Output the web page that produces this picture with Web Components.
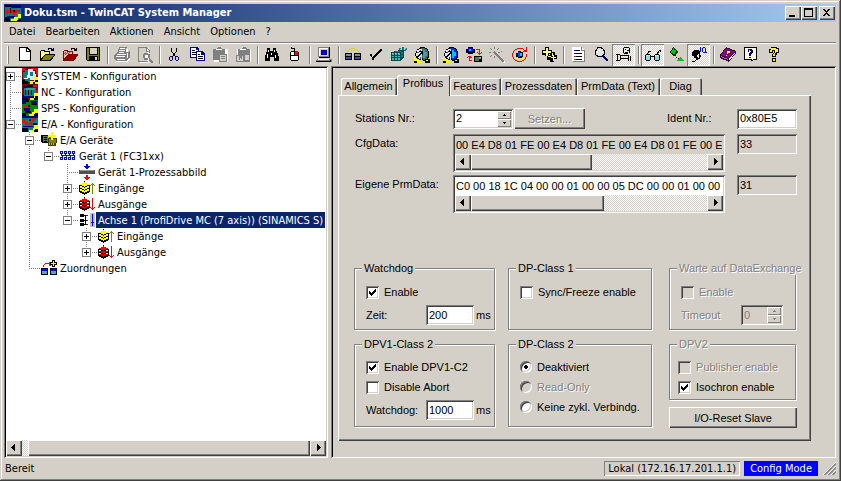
<!DOCTYPE html>
<html lang="de">
<head>
<meta charset="utf-8">
<title>Doku.tsm - TwinCAT System Manager</title>
<style>
html, body { margin: 0; height: 100%; }
body {
  --face: #d4d0c8;
  --raised: inset 1px 1px #fff, inset -1px -1px #404040, inset -2px -2px #808080;
  --sunken: inset 1px 1px #808080, inset -1px -1px #fff, inset 2px 2px #404040, inset -2px -2px #d4d0c8;
  --dither: repeating-conic-gradient(#fff 0 25%, #d4d0c8 0 50%) 0 0 / 2px 2px;
  --ui: "DejaVu Sans Condensed", "DejaVu Sans", sans-serif;
  --dlg: "Liberation Sans", Arial, sans-serif;
  background: var(--face);
  color: #000;
  font: 11px/13px var(--ui);
}
</style>
</head>
<body>
<app-window></app-window>
<script>
function define(name, css, view) {
  customElements.define(name, class extends HTMLElement {
    connectedCallback() {
      if (this.shadowRoot) return;
      const t = document.createElement('template');
      t.innerHTML = `<style>*{box-sizing:border-box}${css}</style>${view(this)}`;
      this.attachShadow({ mode: 'open' }).append(t.content.cloneNode(true));
    }
  });
}

/* ---------- icons, drawn on a 16 x 16 pixel grid ---------- */
const p = (fill, d) => `<path fill="${fill}" d="${d}"/>`;
const l = (stroke, d, w = 1) => `<path fill="none" stroke="${stroke}" stroke-width="${w}" d="${d}"/>`;
const gear = (a, b) =>
  p('#ff0', 'M0 10h5l2 6H0zM12 11h4v5h-5z') +
  p('#000', 'M0 14h3v2H0zM11 14h3v-2h2v4h-5z') +
  p('#000', 'M6 0h5v1h2v1h1v2h1v7h-1v2h-2v1H9v-1H8V1H6z') +
  p('#000', 'M5 1h2v1H5zM3 2h2v1H3zM2 4h1v2H2zM1 6h1v3H1zM2 9h1v2H2zM3 11h2v1H3zM5 12h2v1H5z') +
  p(a, 'M7 1h4v1h2v2h1v6h-1v2h-2v1H9l-1-4z') +
  p(b, 'M9 3h2v2h2v4h-2v2H9V8H8V5h1z') +
  p('#dfe8ec', 'M5 2h3v3h1v3H7v4H5v-1H3V9H2V6h1V3h2z') +
  p(a, 'M3 5h2v1H3zM6 3h1v2H6zM6 10h1v2H6z') +
  l('#000', 'M3 10.5l5-5M5 4.500h3v3');
const diamond = y => `M5 ${y}h1v1h2v1h2v1h-2v1h-2v1h-1v-1h-2v-1h-2v-1h2v-1h2z`;
const stack = (a, b) => p('#000', diamond(9) + diamond(10)) + p(b, diamond(8)) + p('#000', diamond(6)) + p(b, diamond(5)) +
  p('#000', diamond(3)) + p(a, diamond(2)) + p('#000', 'M0 5h1v7H0zM10 5h1v7h-1zM5 1h1v1H5z');

const ICONS = {
  app: p('#008080', 'M0 0h16v16H0z') + p('#000080', 'M6 0h10v3H6z') + p('#000', 'M0 0h6v2H0zM8 5h7v2H8zM0 12h5v4H0zM5 3h1v5H5z') +
    p('#f00', 'M1 5h3v1h1v2H3v2H2V8H0V7h1zM6 5h2v2h2V5h5v2h-3v1h-2v2H8V8H6z') + p('#000080', 'M2 11h8v2H2z') +
    p('#ff0', 'M13 9h3v4h-3v3H6v-2h3v-2h4z') + p('#000', 'M14 14h2v2h-4v-1h2z'),
  sys: p('#800000', 'M0 0h16v16H0z') + p('#f00', 'M0 0h3v3H0zM9 0h7v2H9zM14 2h2v5h-2z') + p('#008080', 'M3 2h5v12H3zM1 4h3v7H1z') +
    p('#d8e8f0', 'M6 1h5v2h2v3h1v4h-2v2H8v-2H5V7h1z') + p('#008080', 'M8 4h3v4H8z') + p('#000', 'M3 1h3v1H3zM1 3h2v1H1zM0 12h3v1h3v3H0z') +
    l('#fff', 'M2 10.500h3l3-4') + p('#ff0', 'M12 9h4v7H8v-3h4z') + p('#000', 'M13 12h3v2h-3v2h-2v-2h2z'),
  nc: p('#800000', 'M0 0h16v16H0z') + p('#000080', 'M1 2h4v3H1zM0 11h12v3H0z') + p('#008080', 'M2 4h12v8H2z') + p('#30a0a0', 'M4 4h9v2H4z') +
    p('#000', 'M5 1h6v2H5zM3 6h1v5H3zM6 6h1v5H6zM9 6h1v5H9zM0 14h6v2H0z') + p('#f00', 'M11 1h4v2h-4zM14 6h2v3h-2z') +
    p('#ff0', 'M12 9h4v5h-4v2H8v-2h4z') + p('#000', 'M13 12h3v4h-4v-2h1z'),
  sps: p('#008000', 'M0 0h16v16H0z') + p('#000080', 'M0 0h4v4H0zM9 1h6v3H9zM2 8h6v3H2z') + p('#f00', 'M4 3h5v1H4zM8 7h5v1H8zM1 6h4v1H1z') +
    p('#000', 'M4 0h3v2H4zM9 4h6v1H9zM3 11h6v2H3zM0 13h4v3H0zM6 5h2v2H6z') + p('#ff0', 'M12 9h4v4h-2v3H7v-2h3v-2h2z') + p('#000', 'M13 13h3v3h-4v-2h1z'),
  ea: p('#008080', 'M0 0h16v16H0z') + p('#000080', 'M0 0h16v2H0z') + p('#f00', 'M0 3h4v3h2v3H3V7H0zM10 2h4v2h-2v2h-2v3H7V6h3z') +
    p('#000', 'M7 3h2v2H7zM11 7h4v2h-4zM0 12h6v4H0z') + p('#000080', 'M1 10h10v1H1z') + p('#ff0', 'M12 9h4v5h-3v2H7v-2h4v-2h1z') + p('#000', 'M13 13h3v3h-4v-2h1z'),
  devices: p('#000', 'M0 3h1v7H0zM1 3h11v8H1z') + p('#508050', 'M2 4h9v6H2z') + p('#000', 'M3 5h3v1H3zM3 7h3v1H3zM3 9h3v1H3z') + p('#c0c0c0', 'M7 5h1v4H7z') +
    p('#404000', 'M7 6h9v5h-1v3H7z') + p('#808000', 'M8 7h7v4H8z') + p('#ff0', 'M10 0h2v3h3v2h-3v3h-2V5H7V3h3z') + p('#c8c800', 'M8 11h1v2H8zM10 11h1v2h-1zM12 11h1v2h-1z'),
  net: p('#00f', 'M0 3h3v3H0zM4 3h3v3H4zM8 3h3v3H8zM12 3h3v3h-3zM0 9h3v3H0zM4 9h3v3H4zM8 9h3v3H8zM12 9h3v3h-3zM1 6h1v1H1zM5 6h1v1H5zM9 6h1v1H9zM13 6h1v1h-1zM2 8h1v1H2zM6 8h1v1H6zM10 8h1v1h-1zM14 8h1v1h-1zM1 7h14v1H1z') +
    p('#fff', 'M1 4h1v1H1zM5 4h1v1H5zM9 4h1v1H9zM13 4h1v1h-1zM1 10h1v1H1zM5 10h1v1H5zM9 10h1v1H9zM13 10h1v1h-1z'),
  image: p('#505050', 'M0 6h16v4H0z') + p('#909090', 'M1 6h14v1H1z') + p('#00f', 'M7 0h2v2h2v1h-1v1H9v1H7V4H6V3H5V2h2z') + p('#f00', 'M7 11h2v2h2v1h-1v1H9v1H7v-1H6v-1H5v-1h2z'),
  inp: stack('#ff0', '#ff0') + p('#808000', 'M13 3h1v11h-1zM12 4h3v1h-3zM11 5h1v1h-1zM15 5h1v1h-1z'),
  out: stack('#f00', '#e00000') + p('#f00', 'M13 2h1v12h-1zM12 12h3v1h-3zM11 11h1v1h-1zM15 11h1v1h-1z'),
  drive: p('#c0c0c0', 'M11 1h5v14h-5z') + p('#00f', 'M13 2h1v11h-1zM12 10h3v1h-3zM13 13h1v1h-1z') + p('#000', 'M1 2h4v3H1zM1 7h4v3H1zM1 11h4v3H1zM5 3h3v1H5zM5 8h3v1H5zM5 12h3v1H5z') + p('#800000', 'M7 3h2v1H7zM7 8h2v1H7zM7 12h2v1H7z') + p('#000', 'M6 3h1v10H6z'),
  maps: p('#000', 'M0 8h7v7H0zM9 8h7v7H9z') + p('#00f', 'M1 9h5v2H1zM10 9h5v2h-5z') + p('#60a0b0', 'M1 11h5v3H1zM10 11h5v3h-5z') + l('#f00', 'M2.500 7V5.500l2-2h5l2 2') + p('#f00', 'M8 2h2v4H8z') + p('#000', 'M11 0h3v2h2v3h-2v2h-3V5H9V2h2z') + p('#ff0', 'M12 1h1v2h2v1h-2v2h-1V4h-2V3h2z'),
  new: p('#000', 'M3 0h8l4 4v10H3z') + p('#fff', 'M4 1h6v4h4v8H4z') + p('#fff', 'M11 2h1v1h1v1h-2z'),
  open: l('#000', 'M9 2.500l1-1h2l2 2M14.500 1v3M12 3.500h3') + p('#000', 'M2 3h3l1 1h5v3h5v1l-4 6H1V4h1z') + p('#ffff80', 'M2 4h3v1h5v2H6L2 11z') + p('#808000', 'M6 8h9l-4 5H3z'),
  openred: l('#000', 'M9 2.500l1-1h2l2 2M14.500 1v3M12 3.500h3') + p('#800000', 'M2 3h3l1 1h5v3h5v1l-4 6H1V4h1z') + p('#ffb0b0', 'M2 4h3v1h5v2H6L2 11z') + p('#e02020', 'M3 5h1v1H3zM5 5h1v1H5zM7 5h1v1H7zM2 6h1v1H2zM4 6h1v1H4zM6 6h1v1H6zM3 7h1v1H3z') + p('#900000', 'M6 8h9l-4 5H3z'),
  save: p('#000', 'M1 0h14v14H2l-1-1z') + p('#808000', 'M2 1h2v7h9V1h1v12H2z') + p('#d4d0c8', 'M5 1h7v6H5zM10 10h2v3h-2z') + p('#000', 'M4 9h9v4h-1v-3h-2v3H4z'),
  print: p('#fff', 'M6 2h8v4h2v6l-3 3H2l-1-5 4-4z') + p('#808080', 'M5 0h8v1h-1v4h2l2-1v6l-3 4H2l-2-2V8l3-3h1z') + p('#fff', 'M6 1h5v1H6zM5 3h6v1H5zM5 5h5v1H5zM3 7h9v1H3zM2 9h9v1H2zM3 12h8v1H3zM13 6h1v5h-1z'),
  preview: p('#fff', 'M3 1h9v15H3z') + p('#d4d0c8', 'M2 1h8v13H2z') + l('#808080', 'M1.500 14.500V.5h8l3 3v2M1.500 14.500h9M9.500 1v3h3') + l('#808080', 'M7 6.500h4M6.500 7v4M11.500 7v4M7 11.500h4M12 12l4 3.500', 2) + p('#fff', 'M8 8h3v3H8z'),
  cut: l('#000', 'M5.500 1v3l4 6M10.500 1v3l-4 6') + l('#000080', 'M4 9.500h2M3.500 10v3M4 13.500h2M6.500 10v3M9 9.500h3M9.500 10v3M10 13.500h2M12.500 10v3'),
  copy: p('#000080', 'M1 0h7l2 2v9H1z') + p('#fff', 'M2 1h5v2h2v7H2z') + p('#000', 'M3 3h3v1H3zM3 5h5v1H3zM3 7h5v1H3z') + p('#000080', 'M7 4h6l3 3v7H7z') + p('#fff', 'M8 5h4v3h3v5H8z') + p('#000', 'M9 7h2v1H9zM9 9h5v1H9zM9 11h5v1H9z'),
  paste: p('#fff', 'M2 2h14v13H2z') + p('#808080', 'M1 2h3l2-2h2l2 2h3v5h2v8H7v-2H1z') + p('#fff', 'M4 2h6v1H4z') + p('#d4d0c8', 'M8 8h6v6H8z') + p('#808080', 'M9 9h4v1H9zM9 11h4v1H9z'),
  pastelink: p('#fff', 'M2 2h14v13H2z') + p('#808080', 'M3 2h3l2-2h2l2 2h3v13H1V8h2z') + p('#d4d0c8', 'M2 9h6v5H2zM10 8h4v5h-4z') + p('#808080', 'M4 9h3v3H6v-1H5v2H4z') + p('#fff', 'M5 2h6v1H5z'),
  find: p('#000', 'M3 1h3v3h3V1h3v3h1l2 6v4h-5v-4H6v4H1v-4l2-6z') + p('#fff', 'M4 3h1v2H4zM3 7h1v4H3zM10 3h1v2h-1zM11 8h1v3h-1zM7 6h1v2H7z'),
  mouse: l('#000', 'M4.500 0v1h3v3') + p('#000', 'M4 4h7v1h1v8h-1v1H4v-1H3V5h1z') + p('#fff', 'M4 5h3v3H4zM4 9h7v4H4z') + p('#f00', 'M8 4h3v4H8z'),
  pc: p('#808080', 'M3 12h13v3H2z') + p('#000', 'M13 0h1v11H3v-1h10zM0 14h14l1-2v3H0z') + p('#808080', 'M2 0h11v10H2zM1 12h13v2H0z') + p('#fff', 'M3 1h9v1H4v7H3zM2 12h11v1H1z') + p('#d4d0c8', 'M4 2h8v7H4z') + p('#00a', 'M5 3h6v5H5z') + p('#00f', 'M6 4h4v3H6z') + p('#0a0', 'M11 13h1v1h-1z'),
  match: p('#000', 'M0 6h7v7H0zM9 6h7v7H9z') + p('#8088b0', 'M1 7h5v2H1zM10 7h5v2h-5z') + p('#4048a0', 'M1 10h5v2H1zM10 10h5v2h-5z') + p('#d8d000', 'M2 4h1v1H2zM3 3h1v1H3zM4 2h2v1H4zM6 1h4v1H6zM10 2h2v1h-2zM12 3h1v1h-1zM13 4h1v1h-1zM6 3h1v1H6zM9 3h1v1H9z'),
  check: p('#000', 'M2 7h2v3h1l7-8h2v1l-8 9v1H4v-2L2 9z'),
  cube: p('#004848', 'M0 5h3V4h4V3h6v7l-3 4H0z') + p('#30c0c0', 'M1 6h2v2H1zM4 6h2v2H4zM7 6h2v2H7zM1 9h2v1H1zM4 9h2v1H4zM7 9h2v1H7zM1 11h2v2H1zM4 11h2v2H4zM7 11h2v2H7z') +
    p('#008080', 'M10 5h2v2h-2zM10 8h2v2h-2zM4 4h6v1H4zM8 1h2v2H8zM11 0h2v3h-2zM14 1h2v2h-2zM13 3h2v1h-2z') + p('#60e0e0', 'M1 6h1v1H1zM4 6h1v1H4zM7 6h1v1H7zM9 2h1v1H9zM14 1h1v1h-1z'),
  gear1: gear('#406868', '#40a0a0'),
  gear2: gear('#0030d0', '#00c0ff'),
  swap: p('#000', 'M2 0h5v2h2v4H7v1H2V6H0V2h2z') + p('#00f', 'M2 1h4v1h2v3H2z') + p('#0cf', 'M3 2h2v2H3z') + p('#ff0', 'M0 6h2v1H0zM7 6h2v1H7z') + l('#f00', 'M10 2.500h3v4M11 5l2.500 2L16 5M6 13.500H3v-4M1 11l2-2 3 2') + p('#000', 'M8 9h8v6H8z') + p('#408040', 'M9 10h4v4H9z') + p('#a0a0a0', 'M13 10h2v2h-2z'),
  wand: l('#fff', 'M6 6l10 10', 2) + l('#808080', 'M5 5l10 10', 2) + p('#808080', 'M5 0h1v2H5zM1 1h1v1H1zM2 2h1v1H2zM9 1h1v1H9zM8 2h1v1H8zM0 5h2v1H0zM9 5h2v1H9zM2 8h1v1H2zM1 9h1v1H1zM5 9h1v2H5zM12 4h1v1h-1z'),
  target: p('#f00', 'M5 1h6v1H5zM3 2h2v1H3zM2 3h1v1H2zM1 4h1v2H1zM0 6h1v4H0zM1 10h1v2H1zM2 12h1v1H2zM3 13h2v1H3zM5 14h5v1H5zM10 13h2v1h-2zM12 12h1v1h-1zM13 10h1v2h-1zM14 7h1v3h-1zM11 2h1v1h-1zM12 3h2v1h-2zM14 0h1v5h-4V4h3z') +
    p('#000', 'M6 4h3v1h2v5h-1v1H6v-1H4V6h2z') + p('#0040ff', 'M6 5h2v5H6z') + p('#0cf', 'M8 6h2v3H8z') + p('#ff0', 'M4 11h2v1H4zM9 11h2v1H9z'),
  plus: p('#000', 'M4 0h4v3h3v2h3v3h2v4h-3v3H9v-2H6v-4H4V8H1V3h3z') + p('#ff8', 'M5 1h2v3h3v2H7v3H5V6H2V4h3z') + p('#ff8', 'M8 7h1v1H8zM11 6h1v3h-1zM7 9h3v1H7zM10 10h5v1h-5zM12 8h1v6h-1z'),
  doc: p('#808080', 'M3 1h9l3 3v11H3z') + p('#fff', 'M2 0h9l3 3v11H2z') + p('#808080', 'M11 0h1v3h2v1h-3z') + p('#00f', 'M4 3h2v1H4zM4 6h2v1H4z') + p('#000', 'M6 3h4v1H6zM6 6h6v1H6zM6 9h6v1H6zM6 12h6v1H6z') + p('#f00', 'M4 9h2v1H4z') + p('#080', 'M4 12h2v1H4z'),
  zoom: p('#000', 'M4 0h5v1h1v1h1v1h1v5h-1v1h-1v1H4V9H3V8H2V3h1V2h1z') + p('#e0e4e0', 'M5 1h3v1h2v2h1v3h-1v1H9v1H5V8H3V4h1V2h1z') + p('#fff', 'M5 3h2v1H5zM4 4h1v2H4z') + l('#000080', 'M10 9l5 5', 2),
  cam: l('#000', 'M1.500 7v7M0 7.500h4M0 13.500h4M4.500 8v5M5 8.500h7v5M5 11.500h8M14.500 9v5') + p('#000', 'M8 0h5v1h1v5h-2v1H8V6H7V1h1z') + p('#e8e8e8', 'M8 1h5v5H8z') + p('#000', 'M9 2h1v1H9zM11 3h2v1h-2zM9 5h3v1H9z'),
  glasses: l('#000', 'M1.500 8l3-4h1M11.500 8l3-5h1v2M1 7.500h4M5.500 8v5M.500 8v5M1 13.500h4M6 9.500h3M9.500 8v5M10 7.500h4M14.500 8v5M10 13.500h4') + p('#80e0e0', 'M1 9h4v4H1zM10 9h4v4h-4z'),
  green: p('#004000', 'M5 0h1v1h1v1h1v1h1v1h1v2H9v1H8v1H7v1H5V8H4V7H3V6H2V4h1V3h1V1h1z') + p('#00c020', 'M5 1h1v2h2v2H7v2H5V6H3V4h1V3h1z') + p('#000', 'M8 10h1v1H8zM10 11h1v1h-1zM7 8h1v1H7z') + p('#00c020', 'M13 10l3 4H9l3-4z'),
  head: p('#000', 'M2 4h1V3h5v1h1v3H7v1H6v2h1v3H5v-2H3v-2H1V5h1z') + l('#000', 'M8.500 6v2l1 1-1 1v1H6M1 14.500h2l3-2') + l('#00f', 'M9.500 0v5M11.500 1v4M12 .5h2M14.500 1v4M12 5.500h4'),
  book: p('#300030', 'M6 0l10 4v2L9 15 0 11V8z') + p('#800080', 'M6 1l9 3.500L8.500 11 1 8z') + p('#fff', 'M9 12l6-7v1l-6 8z') + p('#ff0', 'M7 4h3v2H8v1H7zM6 8h1v1H6z') + p('#c060c0', 'M1 9l7 3v1L1 10z'),
  help: p('#000', 'M1 0h13v13h-4v1H8v-1H1z') + p('#ffffe0', 'M2 1h11v11h-2l-2 1v-1H2z') + p('#000080', 'M5 2h4v1h1v3H9v1H8v2H6V6h1V5h1V4H7V3H6v2H5zM6 10h2v1H6z'),
  q: p('#000', 'M5 0h6v1h2v5h-2v2h-1v2H6V7h1V6h1V4H7v2H3V2h2zM6 11h4v4H6z') + p('#ff0', 'M5 1h5v1h2v3h-2v1H9v3H7V7h1V6h1V3H6v2H4V3h1zM7 12h2v2H7z'),
  min: p('#000', 'M4 9h6v2H4z'),
  max: '<path fill-rule="evenodd" d="M3 2h9v9H3zM4 4v6h7V4z"/>',
  close: p('#000', 'M4 3h2v1h1v1h1V4h1V3h2v1h-1v1H9v1H8v1h1v1h1v1h1v1H9V9H8V8H7v1H6v1H4V9h1V8h1V7h1V6H6V5H5V4H4z')
};
define('px-icon', `:host{display:block;width:16px;height:16px;flex:none}svg{display:block;width:16px;height:16px;shape-rendering:crispEdges}`,
  e => `<svg viewBox="0 0 16 16" aria-hidden="true">${ICONS[e.getAttribute('name')]}</svg>`);

/* ---------- window chrome ---------- */
define('title-bar', `
:host{display:flex;align-items:center;height:18px;padding:0 1px 0 1px;background:linear-gradient(90deg,#0a246a,#a6caf0);color:#fff}
h1{margin:0;padding-left:3px;flex:1;font:bold 11px/18px var(--ui);white-space:nowrap}
button{width:16px;height:14px;padding:0;border:0;background:var(--face);box-shadow:var(--raised);overflow:hidden}
.x{margin-left:2px}`,
  () => `<px-icon name="app"></px-icon><h1>Doku.tsm - TwinCAT System Manager</h1>
  <button aria-label="Minimieren"><px-icon name="min"></px-icon></button><button aria-label="Maximieren"><px-icon name="max"></px-icon></button><button class="x" aria-label="Schließen"><px-icon name="close"></px-icon></button>`);

define('menu-bar', `
:host{display:flex;height:21px;border-bottom:1px solid #808080;box-shadow:0 1px #fff}
button{border:0;background:none;padding:0 5px;font:11px/20px var(--ui);color:#000}
nav{display:flex}`,
  () => `<nav>${['Datei', 'Bearbeiten', 'Aktionen', 'Ansicht', 'Optionen', '?'].map(t => `<button>${t}</button>`).join('')}</nav>`);

const TOOLS = ['new open openred save', 'print- preview-', 'cut copy paste- pastelink-', 'find mouse', 'pc', 'match check cube gear1',
  'gear2 swap wand- target', 'plus', 'doc zoom cam*', 'glasses* green head*', 'book help q'];
define('tool-bar', `
:host{display:flex;height:22px;margin-top:1px;padding-left:3px}
.grip{width:2px;margin:2px 3px 2px 0;border-left:1px solid #fff;border-right:1px solid #808080}
.group{display:flex}
.group+.group{padding-left:6px;background:linear-gradient(90deg,#808080 50%,#fff 50%) 3px 2px/2px 18px no-repeat}
button{width:23px;height:22px;padding:3px 3px 3px 4px;border:0;background:none}
.on{background:var(--dither);box-shadow:inset 1px 1px #808080,inset -1px -1px #fff}`,
  () => `<span class="grip"></span>` + TOOLS.map(g => `<div class="group">${g.split(' ').map(n => {
    const id = n.replace(/[-*]/, '');
    return `<button aria-label="${id}" ${n.endsWith('*') ? 'class="on" aria-pressed="true"' : ''} ${n.endsWith('-') ? 'disabled' : ''}><px-icon name="${id}"></px-icon></button>`;
  }).join('')}</div>`).join(''));

define('scroll-bar', `
:host{display:flex;height:16px;background:var(--dither)}
button{flex:none;width:16px;height:16px;padding:0;border:0;background:var(--face);box-shadow:var(--raised)}
svg{display:block;margin:auto;width:8px;height:8px;shape-rendering:crispEdges}
.track{flex:1;display:flex}
.thumb{background:var(--face);box-shadow:var(--raised)}`,
  e => `<button tabindex="-1" aria-label="Links"><svg viewBox="0 0 8 8"><path d="M5 0v7h-1v-1h-1v-1h-1v-1h-1v-1h1v-1h1v-1h1v-1z"/></svg></button>
  <div class="track"><span style="flex:${e.getAttribute('before') || 0}"></span><span class="thumb" style="flex:${e.getAttribute('thumb')}"></span><span style="flex:${e.getAttribute('after') || 0}"></span></div>
  <button tabindex="-1" aria-label="Rechts"><svg viewBox="0 0 8 8"><path d="M3 0v7h1v-1h1v-1h1v-1h1v-1h-1v-1h-1v-1h-1v-1z"/></svg></button>`);

/* ---------- tree ---------- */
/* lines: one character per level. space = none, | = through, T = branch, F = first branch, L = last branch */
define('tree-row', `
:host{display:flex;height:16px;line-height:17px}
.g{flex:none;width:19px;height:16px;--dot:repeating-linear-gradient(180deg,#808080 0 1px,transparent 1px 2px);--dash:repeating-linear-gradient(90deg,#808080 0 1px,transparent 1px 2px)}
.g.own{width:16px}
.v{background:var(--dot) 4px 0/1px 16px no-repeat}
.T{background:var(--dot) 4px 0/1px 16px no-repeat,var(--dash) 4px 8px/12px 1px no-repeat}
.F{background:var(--dot) 4px 8px/1px 8px no-repeat,var(--dash) 4px 8px/12px 1px no-repeat}
.L{background:var(--dot) 4px 0/1px 8px no-repeat,var(--dash) 4px 8px/12px 1px no-repeat}
svg{display:block;width:9px;height:16px;shape-rendering:crispEdges}
.t{margin-left:1px;padding:0 2px;white-space:nowrap}
:host([selected]) .t{background:#0a246a;color:#fff}`,
  e => {
    const ln = e.getAttribute('lines'), ex = e.getAttribute('exp');
    return [...ln].map((c, i) => {
      const own = i === ln.length - 1;
      return `<span class="g ${own ? 'own' : ''} ${c === '|' ? 'v' : c === ' ' ? '' : c}">${own && ex ?
        `<svg viewBox="0 0 9 16"><path fill="#808080" d="M0 4h9v9H0z"/><path fill="#fff" d="M1 5h7v7H1z"/><path d="M2 8h5v1H2z${ex === '+' ? 'M4 6h1v5H4z' : ''}"/></svg>` : ''}</span>`;
    }).join('') + `<px-icon name="${e.getAttribute('icon')}"></px-icon><span class="t"><slot></slot></span>`;
  });

const TREE = [
  ['F', '+', 'sys', 'SYSTEM - Konfiguration'], ['T', '', 'nc', 'NC - Konfiguration'], ['T', '', 'sps', 'SPS - Konfiguration'],
  ['L', '-', 'ea', 'E/A - Konfiguration'], [' T', '-', 'devices', 'E/A Geräte'], [' |L', '-', 'net', 'Gerät 1 (FC31xx)'],
  [' | T', '', 'image', 'Gerät 1-Prozessabbild'], [' | T', '+', 'inp', 'Eingänge'], [' | T', '+', 'out', 'Ausgänge'],
  [' | L', '-', 'drive', 'Achse 1 (ProfiDrive MC (7 axis)) (SINAMICS S)'], [' |  T', '+', 'inp', 'Eingänge'], [' |  L', '+', 'out', 'Ausgänge'],
  [' L', '', 'maps', 'Zuordnungen']];
define('config-tree', `
:host{display:flex;flex-direction:column;padding:2px;background:#fff;box-shadow:inset 1px 1px #808080,inset -1px -1px #fff,inset 2px 2px #000,inset -2px -2px #d4d0c8}
.rows{flex:1;overflow:hidden}`,
  () => `<div class="rows" role="tree">${TREE.map((r, i) => `<tree-row role="treeitem" lines="${r[0]}" exp="${r[1]}" icon="${r[2]}" ${i === 9 ? 'selected' : ''}>${r[3]}</tree-row>`).join('')}</div>
  <scroll-bar before="6" thumb="281" after="0"></scroll-bar>`);

/* ---------- form controls ---------- */
define('tab-strip', `
:host{display:flex;align-items:flex-end;height:20px;padding-left:3px}
button{height:17px;margin:0;padding:0 4px 0 3px;border:0;border-radius:2px 2px 0 0;background:none;font:11px/17px var(--dlg);white-space:nowrap;color:#000;box-shadow:inset 1px 1px #fff,inset -1px 0 #404040,inset -2px 0 #808080}
.on{position:relative;height:21px;margin-bottom:-1px;padding-bottom:4px;background:var(--face);box-shadow:inset 1px 1px #fff,inset -1px 0 #404040}
div{display:flex;align-items:flex-end}`,
  () => `<div role="tablist">${[['Allgemein', 56], ['Profibus', 53], ['Features', 51], ['Prozessdaten', 76], ['PrmData (Text)', 83], ['Diag', 42]].map(([t, w], i) =>
    `<button role="tab" style="min-width:${w}px" ${i === 1 ? 'class="on" aria-selected="true"' : ''}>${t}</button>`).join('')}</div>`);

const FIELD = `
label{white-space:nowrap}
input{width:100%;height:20px;margin:0;padding:0 3px 1px;border:0;border-radius:0;background:#fff;box-shadow:var(--sunken);font:11px/16px var(--dlg);color:#000;outline:0}
input[readonly],input:disabled{background:var(--face)}
input:disabled{color:#808080}`;

define('text-field', `${FIELD}
:host{display:flex;align-items:center}
label{flex:var(--lf,1);width:var(--l,auto)}
input{flex:none;width:var(--w,60px)}
.u{margin-left:2px}`,
  e => `<label for="i">${e.getAttribute('label')}</label><input id="i" value="${e.getAttribute('value')}">${e.hasAttribute('unit') ? `<span class="u">${e.getAttribute('unit')}</span>` : ''}`);

define('spin-field', `${FIELD}
:host{display:flex;align-items:center}
label{flex:none;width:var(--l)}
:host([disabled]) label{color:#808080;text-shadow:1px 1px #fff}
.box{display:flex;width:var(--w);background:#fff;box-shadow:var(--sunken)}
:host([disabled]) .box{background:var(--face)}
.box input{flex:1;min-width:0;background:none;box-shadow:none}
.s{display:flex;flex-direction:column;flex:none;width:14px;margin:2px 2px 2px 0}
button{height:8px;padding:0;border:0;background:var(--face);box-shadow:inset 1px 1px #fff,inset -1px -1px #808080}
svg{display:block;margin:auto;width:3px;height:2px;shape-rendering:crispEdges}
:host([disabled]) svg{fill:#808080}`,
  e => { const d = e.hasAttribute('disabled') ? 'disabled' : ''; return `<label for="i">${e.getAttribute('label')}</label><span class="box"><input id="i" value="${e.getAttribute('value')}" ${d}><span class="s">
  <button ${d} aria-label="Erhöhen"><svg viewBox="0 0 3 2"><path d="M1 0h1v1h1v1H0V1h1z"/></svg></button><button ${d} aria-label="Verringern"><svg viewBox="0 0 3 2"><path d="M0 0h3v1H2v1H1V1H0z"/></svg></button></span></span>`; });

define('hex-field', `${FIELD}
:host{display:grid;grid-template-columns:98px minmax(0,1fr) 60px;align-items:start}
label{padding-top:3px}
.box{padding:2px;margin-right:12px;background:var(--face);box-shadow:var(--sunken)}
.box input{height:18px;padding:0 1px 1px;box-shadow:none;display:block}`,
  e => `<label for="i">${e.getAttribute('label')}</label><div class="box"><input id="i" value="${e.getAttribute('value')}" ${e.hasAttribute('readonly') ? 'readonly' : ''}><scroll-bar thumb="${e.getAttribute('thumb')}" after="${e.getAttribute('after')}"></scroll-bar></div>
  <input aria-label="Länge" value="${e.getAttribute('length')}" readonly>`);

define('tick-box', `
:host{display:block}
label{display:flex;align-items:center;height:16px;white-space:nowrap}
input{appearance:none;flex:none;width:13px;height:13px;margin:0 5px 0 0;background:#fff;box-shadow:var(--sunken)}
input:checked{background:#fff url("data:image/svg+xml,%3Csvg xmlns='http://www.w3.org/2000/svg' width='13' height='13' shape-rendering='crispEdges'%3E%3Cpath d='M3 5h1v1h1v1h1V6h1V5h1V4h1V3h1v3H9v1H8v1H7v1H6v1H5V9H4V8H3z'/%3E%3C/svg%3E")}
input[type=radio]{border-radius:50%;width:12px;height:12px}
input[type=radio]:checked{background:radial-gradient(circle,#000 2px,#fff 2px)}
:host([disabled]) input{background:var(--face)}
:host([disabled]) label{color:#808080;text-shadow:1px 1px #fff}`,
  e => `<label><input type="${e.getAttribute('type') || 'checkbox'}" name="c" ${e.hasAttribute('checked') ? 'checked' : ''} ${e.hasAttribute('disabled') ? 'disabled' : ''}><slot></slot></label>`);

define('group-box', `
:host{display:flex;flex-direction:column;min-width:0}
fieldset{flex:1;min-width:0;margin:0 1px 1px 0;padding:var(--pt,8px) 3px 4px var(--pl,11px);border:1px solid #808080;box-shadow:1px 1px #fff,inset 1px 1px #fff}
legend{margin-left:calc(7px - var(--pl,11px));padding:0 2px;background:var(--face);white-space:nowrap;line-height:13px}
:host([disabled]) legend{color:#808080;text-shadow:1px 1px #fff}`,
  e => `<fieldset><legend>${e.getAttribute('label')}</legend><slot></slot></fieldset>`);

define('push-button', `
:host{display:block}
button{display:block;width:100%;height:21px;padding:0;border:0;background:var(--face);box-shadow:var(--raised);font:11px/20px var(--dlg);color:#000}
button:disabled{color:#808080;text-shadow:1px 1px #fff}`,
  e => `<button ${e.hasAttribute('disabled') ? 'disabled' : ''}><slot></slot></button>`);

define('profibus-page', `
:host{display:block;flex:1;padding:13px 14px 12px 17px;font:11px/13px var(--dlg);box-shadow:inset 1px 1px #fff,inset -1px -1px #404040,inset -2px -2px #808080}
.row{display:flex;align-items:center;margin-bottom:5px}
.row spin-field{--l:98px;--w:60px;margin-right:1px}
.row push-button{width:71px}
.row text-field{flex:1;margin-left:82px;--w:60px}
hex-field{margin-bottom:3px}
.groups{display:grid;grid-template-columns:141fr 144fr 131fr;column-gap:12px;row-gap:7px;margin:49px 0 0 -1px}
.third{padding-left:4px}
.stack{display:flex;flex-direction:column;gap:6px}
.wd{--pt:9px}
tick-box+tick-box{margin-top:4px}
.ms{margin-top:5px;--lf:none;--l:60px;--w:48px}
.time{margin-top:5px;--l:60px;--w:42px}
.dpv2{--pl:8px}`,
  () => `<div class="row"><spin-field label="Stations Nr.:" value="2"></spin-field><push-button disabled>Setzen...</push-button><text-field label="Ident Nr.:" value="0x80E5"></text-field></div>
  <hex-field label="CfgData:" readonly value="00 E4 D8 01 FE 00 E4 D8 01 FE 00 E4 D8 01 FE 00 E4 D8 01 FE 00 E4" length="33" thumb="122" after="116"></hex-field>
  <hex-field label="Eigene PrmData:" value="C0 00 18 1C 04 00 00 01 00 00 05 DC 00 00 01 00 00 00 00 00 00" length="31" thumb="134" after="104"></hex-field>
  <div class="groups">
    <group-box class="wd" label="Watchdog"><tick-box checked>Enable</tick-box><text-field class="ms" label="Zeit:" value="200" unit="ms"></text-field></group-box>
    <group-box class="wd" label="DP-Class 1"><tick-box>Sync/Freeze enable</tick-box></group-box>
    <group-box class="wd third" disabled label="Warte auf DataExchange"><tick-box disabled>Enable</tick-box><spin-field class="time" disabled label="Timeout" value="0"></spin-field></group-box>
    <group-box label="DPV1-Class 2"><tick-box checked>Enable DPV1-C2</tick-box><tick-box>Disable Abort</tick-box><text-field class="ms" label="Watchdog:" value="1000" unit="ms"></text-field></group-box>
    <group-box label="DP-Class 2"><tick-box type="radio" checked>Deaktiviert</tick-box><tick-box type="radio" disabled>Read-Only</tick-box><tick-box type="radio">Keine zykl. Verbindg.</tick-box></group-box>
    <div class="third stack"><group-box class="dpv2" label="DPV2" disabled><tick-box disabled>Publisher enable</tick-box><tick-box checked>Isochron enable</tick-box></group-box><push-button>I/O-Reset Slave</push-button></div>
  </div>`);

define('detail-pane', `
:host{display:flex;flex-direction:column;min-width:0;padding:9px 25px 17px 7px;box-shadow:inset 1px 1px #808080,inset -1px -1px #fff,inset 2px 2px #000}`,
  () => `<tab-strip></tab-strip><profibus-page></profibus-page>`);

define('status-bar', `
:host{display:flex;align-items:center;height:20px;padding-left:1px;gap:4px}
.m{flex:1}
.b{height:15px;padding:0 4px;line-height:15px;white-space:nowrap;box-shadow:inset 1px 1px #808080,inset -1px -1px #fff}
.c{background:#00f;color:#fff;box-shadow:none;padding:0 6px}
svg{width:14px;height:14px}`,
  () => `<span class="m">Bereit</span><span class="b">Lokal (172.16.17.201.1.1)</span><span class="b c">Config Mode</span>
  <svg viewBox="0 0 14 14"><path fill="none" stroke="#fff" d="M1 14L14 1M5 14l9-9M9 14l5-5"/><path fill="none" stroke="#808080" stroke-width="1.500" d="M2.500 14L14 2.500M6.500 14L14 6.500M10.500 14l3.500-3.500"/></svg>`);

define('app-window', `
:host{display:flex;flex-direction:column;height:100vh;min-height:0;padding:4px 5px 3px 4px;background:var(--face);box-shadow:inset -1px -1px #404040,inset 1px 1px #d4d0c8,inset -2px -2px #808080,inset 2px 2px #fff;box-sizing:border-box}
main{flex:1;min-height:0;display:grid;grid-template-columns:minmax(0,324fr) minmax(0,505fr);column-gap:3px}`,
  () => `<title-bar></title-bar><menu-bar></menu-bar><tool-bar></tool-bar><main><config-tree></config-tree><detail-pane></detail-pane></main><status-bar></status-bar>`);
</script>
</body>
</html>
